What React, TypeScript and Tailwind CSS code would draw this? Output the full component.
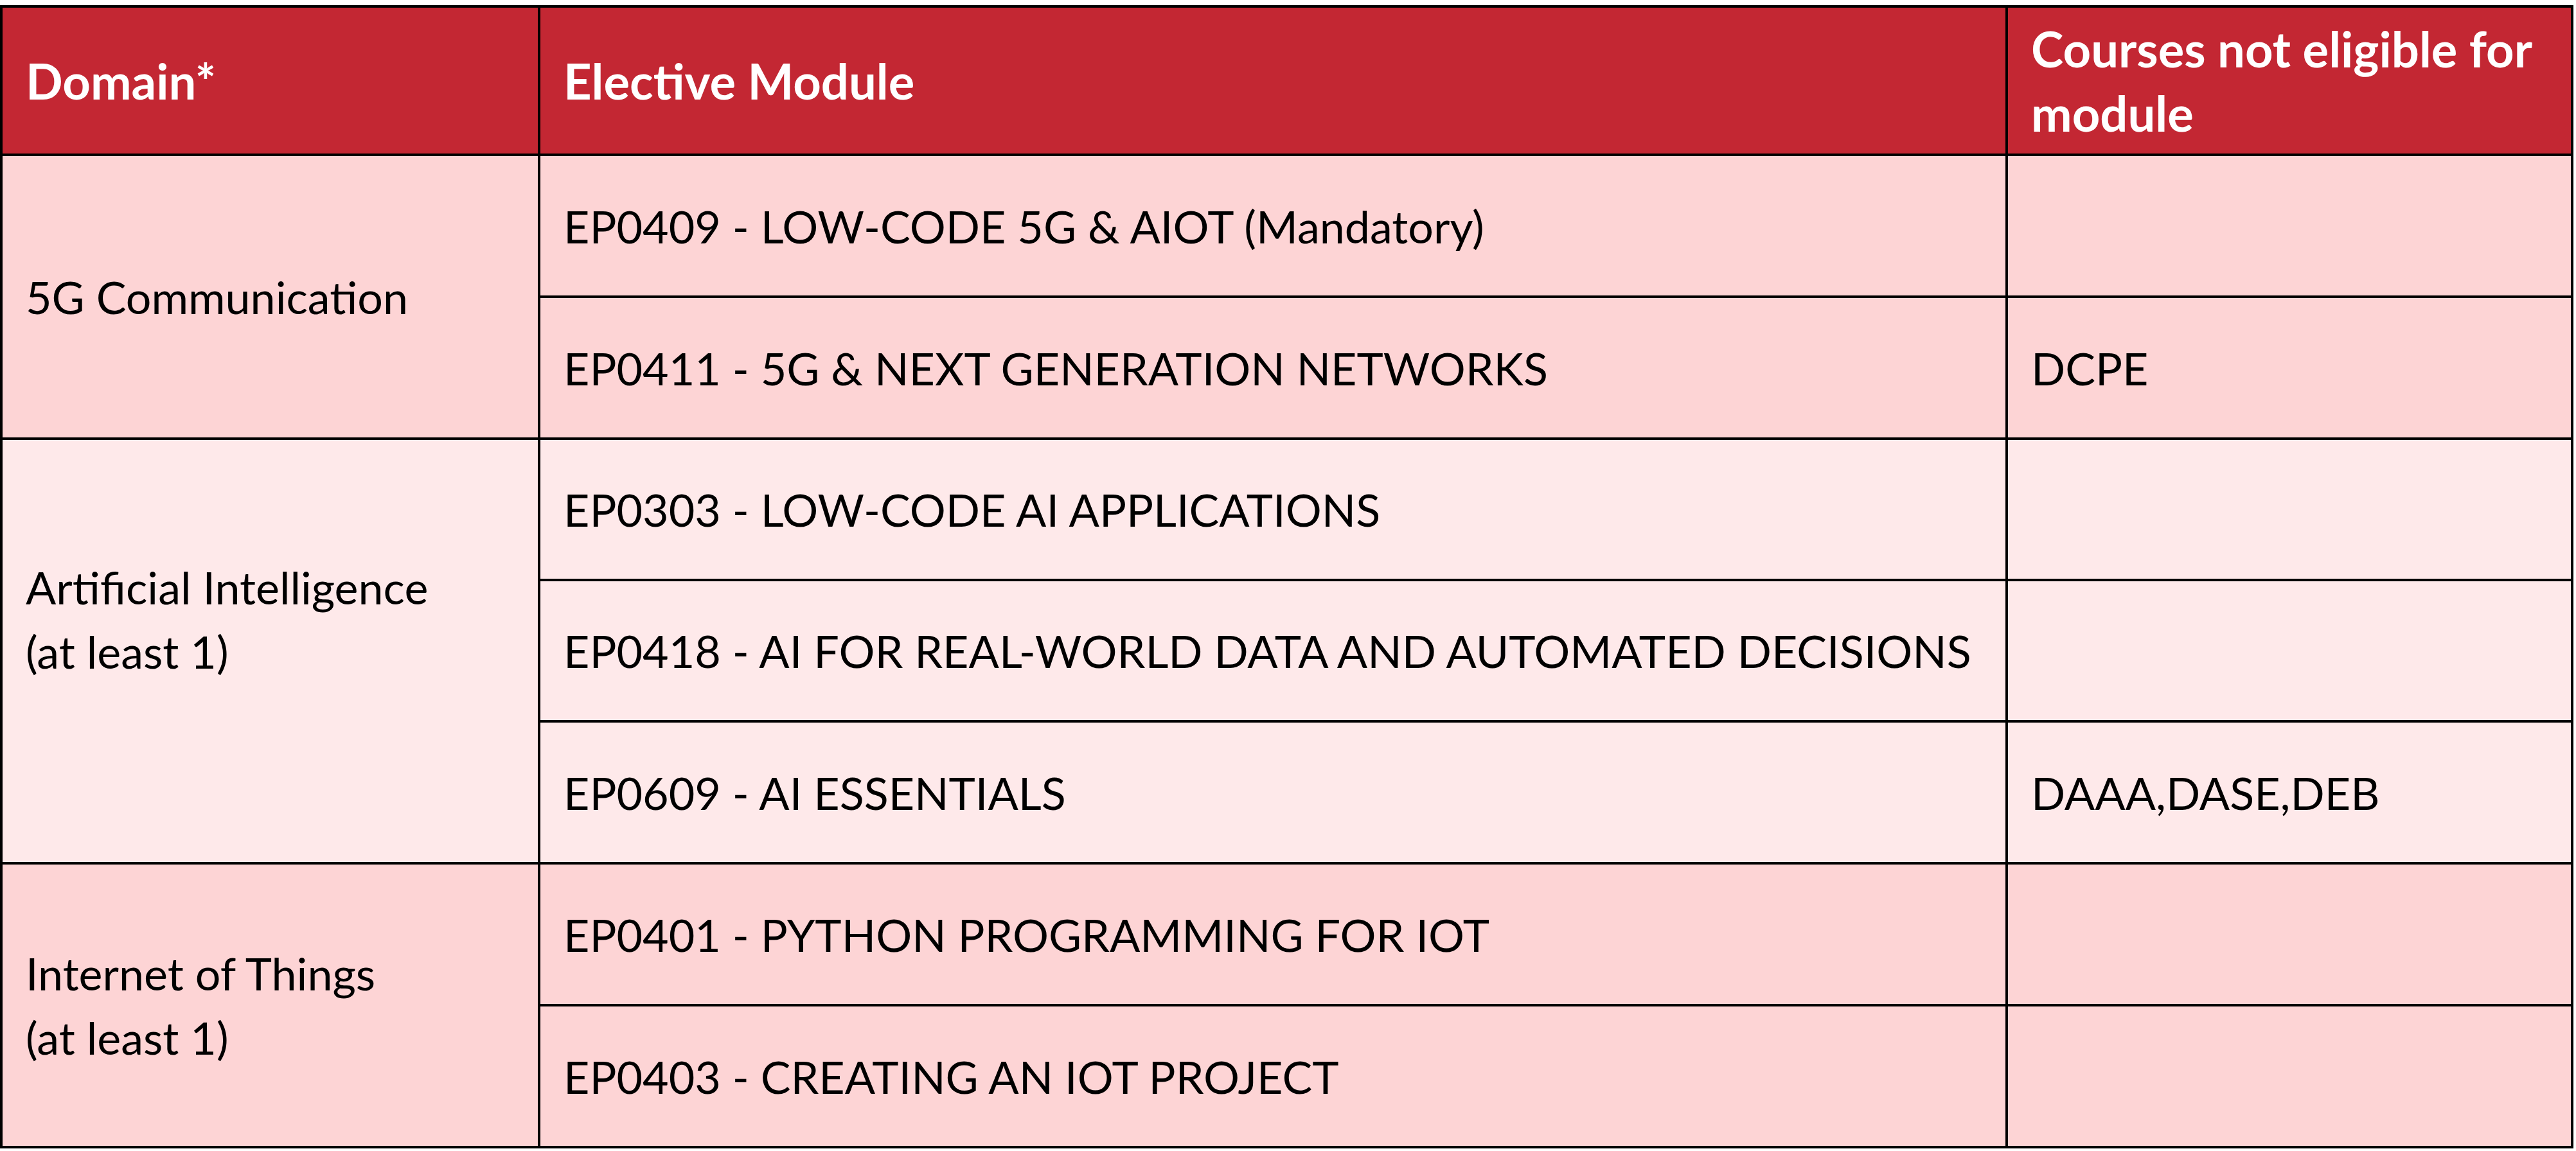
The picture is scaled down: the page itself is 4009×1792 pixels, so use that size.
type Row = { code: string; excluded?: string; h: string };
type Group = { domain: string[]; bg: string; rows: Row[] };

// the AI cell carries a trailing empty paragraph in the source slide, which lifts its text
const GROUPS: Group[] = [
  {
    domain: ["5G Communication"],
    bg: "bg-[#fdd4d5]",
    rows: [
      { code: "EP0409 - LOW-CODE 5G & AIOT (Mandatory)", h: "h-[221px]" },
      { code: "EP0411 - 5G & NEXT GENERATION NETWORKS", excluded: "DCPE", h: "h-[221px]" },
    ],
  },
  {
    domain: ["Artificial Intelligence", "(at least 1)", ""],
    bg: "bg-[#fee9ea]",
    rows: [
      { code: "EP0303 - LOW-CODE AI APPLICATIONS", h: "h-[220px]" },
      { code: "EP0418 - AI FOR REAL-WORLD DATA AND AUTOMATED DECISIONS", h: "h-[220px]" },
      { code: "EP0609 - AI ESSENTIALS", excluded: "DAAA,DASE,DEB", h: "h-[221px]" },
    ],
  },
  {
    domain: ["Internet of Things", "(at least 1)"],
    bg: "bg-[#fdd4d5]",
    rows: [
      { code: "EP0401 - PYTHON PROGRAMMING FOR IOT", h: "h-[221px]" },
      { code: "EP0403 - CREATING AN IOT PROJECT", h: "h-[221px]" },
    ],
  },
];

const cell = "border-4 border-black pl-[36px] pr-4 align-middle text-left";

export default function App() {
  return (
    <div className="min-h-screen bg-white pt-[8px] font-['Lato',sans-serif]">
      <table className="w-[4005px] table-fixed border-collapse text-[70px] leading-[100px] text-black">
        <colgroup>
          <col className="w-[837px]" />
          <col className="w-[2284px]" />
          <col className="w-[880px]" />
        </colgroup>
        <thead>
          <tr className="h-[231px] bg-[#c32733] text-[76px] font-bold text-white">
            <th className={cell}>Domain*</th>
            <th className={cell}>Elective Module</th>
            <th className={cell}>
              Courses not eligible for
              <br />
              module
            </th>
          </tr>
        </thead>
        <tbody>
          {GROUPS.map((g) =>
            g.rows.map((r, i) => (
              <tr key={r.code} className={`${r.h} ${g.bg}`}>
                {i === 0 && (
                  <td rowSpan={g.rows.length} className={cell}>
                    {g.domain.map((line, j) => (
                      <div key={j} className="h-[100px]">
                        {line}
                      </div>
                    ))}
                  </td>
                )}
                <td className={cell}>{r.code}</td>
                <td className={cell}>{r.excluded ?? ""}</td>
              </tr>
            ))
          )}
        </tbody>
      </table>
    </div>
  );
}
